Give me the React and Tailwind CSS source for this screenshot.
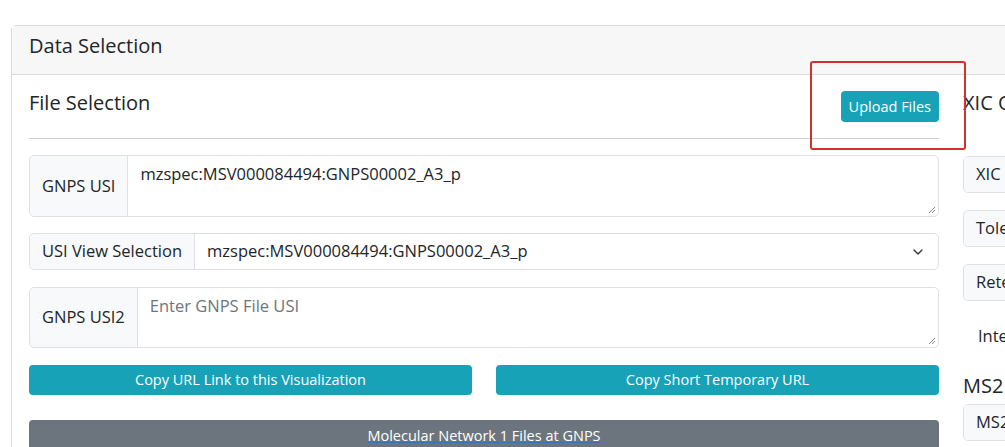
import { ChevronDown } from "lucide-react";

// label kiri + isian, gaya input-group ala bootstrap
const Group = ({ label, children, className = "" }) => (
  <div className={`flex rounded-[5px] border border-[#dee2e6] text-[16.5px] ${className}`}>
    <div className="flex shrink-0 items-center border-r border-[#dee2e6] bg-[#f8f9fa] px-3 rounded-l-[5px]">
      {label}
    </div>
    {children}
  </div>
);

const TextArea = ({ value, placeholder }) => (
  <div className="relative flex-1 px-3 pt-[6px]">
    {value ? (
      <span className="text-[#212529]">{value}</span>
    ) : (
      <span className="text-[#6c757d]">{placeholder}</span>
    )}
    {/* pegangan resize textarea */}
    <svg className="absolute bottom-[2px] right-[2px]" width="9" height="9" viewBox="0 0 9 9">
      <path d="M8 2L2 8M8 5L5 8" stroke="#888" strokeWidth="1" />
    </svg>
  </div>
);

const App = () => {
  return (
    <div
      className="relative h-[447px] w-[1005px] overflow-hidden bg-white text-[#212529]"
      style={{ fontFamily: '"Open Sans", "Noto Sans", sans-serif' }}
    >
      <div className="pl-[11px] pt-[25px]">
        <div className="w-[1900px] rounded-[5px] border border-[#dcdcdc]">
          {/* header kartu */}
          <div className="h-[49px] border-b border-[#dcdcdc] bg-[#f7f7f7] px-[17px] pt-[5px] text-[20px] leading-[30px]">
            Data Selection
          </div>

          {/* isi kartu */}
          <div className="flex gap-6 px-[17px] pt-[16px]">
            {/* kolom kiri */}
            <div className="w-[910px] shrink-0">
              <div className="flex h-[31px] items-start justify-between">
                <h2 className="-mt-[3px] text-[20px] leading-[30px]">File Selection</h2>
                <button className="h-[31px] rounded-[4px] bg-[#17a2b8] px-[8px] text-[14.5px] text-white">
                  Upload Files
                </button>
              </div>
              <hr className="mt-[16px] border-[#d0d0d0]" />

              <Group label="GNPS USI" className="mt-[16px] h-[62px]">
                <TextArea value="mzspec:MSV000084494:GNPS00002_A3_p" />
              </Group>

              <Group label="USI View Selection" className="mt-[16px] h-[37px]">
                <div className="flex flex-1 items-center justify-between px-3">
                  <span>mzspec:MSV000084494:GNPS00002_A3_p</span>
                  <ChevronDown size={16} strokeWidth={2} className="text-[#333]" />
                </div>
              </Group>

              <Group label="GNPS USI2" className="mt-[17px] h-[61px]">
                <TextArea placeholder="Enter GNPS File USI" />
              </Group>

              <div className="mt-[17px] grid grid-cols-2 gap-6">
                <button className="h-[30px] rounded-[4px] bg-[#17a2b8] text-[14.5px] text-white">
                  Copy URL Link to this Visualization
                </button>
                <button className="h-[30px] rounded-[4px] bg-[#17a2b8] text-[14.5px] text-white">
                  Copy Short Temporary URL
                </button>
              </div>

              <div className="mt-[25px] flex h-[32px] items-center justify-center rounded-t-[4px] bg-[#6c757d] text-[14.5px] text-white">
                <span className="underline decoration-[#3b6fb6]">Molecular Network 1 Files at GNPS</span>
              </div>
            </div>

            {/* kolom kanan */}
            <div className="w-[910px] shrink-0">
              <div className="flex h-[31px] items-start">
                <h2 className="-mt-[3px] text-[20px] leading-[30px]">XIC Options</h2>
              </div>
              <Group label="XIC m/z" className="mt-[34px] h-[37px]">
                <div className="flex-1" />
              </Group>
              <Group label="Tolerance" className="mt-[17px] h-[37px]">
                <div className="flex-1" />
              </Group>
              <Group label="Retention Time" className="mt-[17px] h-[37px]">
                <div className="flex-1" />
              </Group>
              <div className="mt-[17px] flex h-[37px] items-center pl-[15px] text-[16.5px]">Integration</div>
              <h2 className="mt-[16px] text-[20px] leading-[30px]">MS2 Options</h2>
              <Group label="MS2 Identifier" className="mt-[3px] h-[37px]">
                <div className="flex-1" />
              </Group>
            </div>
          </div>
        </div>
      </div>

      {/* kotak merah penanda */}
      <div className="absolute left-[810px] top-[61px] h-[89px] w-[156px] rounded-[3px] border-[2.5px] border-[#d32f2f]" />
    </div>
  );
};

export default App;
